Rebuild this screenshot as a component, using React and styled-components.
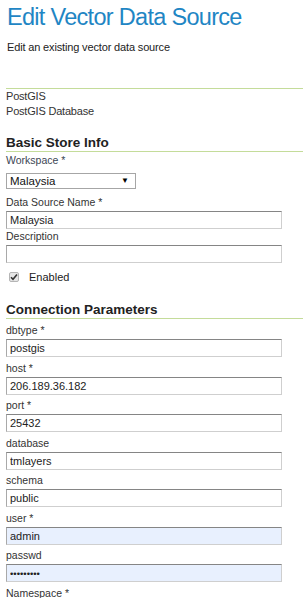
import React from "react";
import styled, { createGlobalStyle } from "styled-components";

const GlobalStyle = createGlobalStyle`
  body {
    margin: 0;
    background: #fff;
    font-family: "Liberation Sans", Arial, sans-serif;
    color: #222;
  }
`;

const Page = styled.div`
  width: 303px;
  height: 598px;
  overflow: hidden;
  padding-left: 6px;
  box-sizing: border-box;
`;

const Title = styled.h1`
  margin: 0;
  font-weight: normal;
  font-size: 23.5px;
  line-height: 34px;
  letter-spacing: -0.7px;
  color: #1f86c4;
  padding-left: 1px;
`;

const Subtitle = styled.p`
  margin: 7px 0 0 1px;
  font-size: 11px;
  line-height: 13px;
  letter-spacing: -0.15px;
  color: #222;
`;

const Divider = styled.div`
  margin-top: 34px;
  border-top: 1px solid #c4dc9a;
`;

const Info = styled.div`
  font-size: 11px;
  line-height: 15px;
  letter-spacing: -0.2px;
  color: #333;
`;

const SectionTitle = styled.h3`
  margin: ${(p) => p.$top}px 0 0;
  font-size: 13.5px;
  line-height: 16px;
  font-weight: bold;
  color: #222;
  border-bottom: 1px solid #c4dc9a;
`;

const Label = styled.label`
  display: block;
  font-size: 10.5px;
  line-height: 14px;
  margin: ${(p) => p.$top ?? 3.5}px 0 2px;
  color: ${(p) => (p.$muted ? "#3b4654" : "#333")};
`;

const Input = styled.input`
  display: block;
  box-sizing: border-box;
  width: 276px;
  height: 18px;
  margin: 0;
  padding: 0 3px;
  font-family: "Liberation Sans", Arial, sans-serif;
  font-size: 11px;
  color: #222;
  background: ${(p) => (p.$filled ? "#e8f0fe" : "#fff")};
  border: 1px solid #cfcfcf;
  border-top-color: #858585;
  border-left-color: #a9a9a9;
  outline: none;
  &[type="password"] {
    font-size: 9.5px;
  }
`;

const Select = styled.div`
  box-sizing: border-box;
  width: 130px;
  height: 16px;
  margin-top: 5.5px;
  border: 1px solid #a6a6a6;
  display: flex;
  align-items: center;
  justify-content: space-between;
  padding: 0 6px 0 3px;
  font-size: 11.5px;
  color: #111;
`;

const Arrow = styled.span`
  font-size: 8px;
  color: #000;
`;

const CheckRow = styled.div`
  display: flex;
  align-items: flex-start;
  margin-top: 8.5px;
  padding-left: 3px;
  font-size: 11px;
  line-height: 11px;
  color: #222;
`;

const Box = styled.span`
  box-sizing: border-box;
  width: 10px;
  height: 10px;
  border: 1px solid #b5b5b5;
  border-radius: 2px;
  background: #e6e6e6;
  display: flex;
  align-items: center;
  justify-content: center;
  margin-right: 10px;
`;

const fields = [
  { label: "dbtype *", value: "postgis", top: 4 },
  { label: "host *", value: "206.189.36.182" },
  { label: "port *", value: "25432" },
  { label: "database", value: "tmlayers" },
  { label: "schema", value: "public" },
  { label: "user *", value: "admin", filled: true },
  { label: "passwd", value: "admin1234", filled: true, type: "password" },
];

export default function App() {
  return (
    <Page>
      <GlobalStyle />
      <Title>Edit Vector Data Source</Title>
      <Subtitle>Edit an existing vector data source</Subtitle>
      <Divider />
      <Info>
        PostGIS
        <br />
        PostGIS Database
      </Info>

      <SectionTitle $top={16}>Basic Store Info</SectionTitle>
      <Label $top={1} $muted>
        Workspace *
      </Label>
      <Select>
        <span>Malaysia</span>
        <Arrow>▼</Arrow>
      </Select>
      <Label $top={6}>Data Source Name *</Label>
      <Input defaultValue="Malaysia" readOnly />
      <Label $top={0.5}>Description</Label>
      <Input defaultValue="" readOnly />
      <CheckRow>
        <Box>
          <svg width="8" height="8" viewBox="0 0 8 8">
            <path d="M1 4.2 L3 6.3 L7 1.5" stroke="#333" strokeWidth="1.6" fill="none" />
          </svg>
        </Box>
        Enabled
      </CheckRow>

      <SectionTitle $top={19.5}>Connection Parameters</SectionTitle>
      {fields.map((f) => (
        <React.Fragment key={f.label}>
          <Label $top={f.top}>{f.label}</Label>
          <Input
            defaultValue={f.value}
            readOnly
            $filled={f.filled}
            type={f.type || "text"}
          />
        </React.Fragment>
      ))}
      <Label>Namespace *</Label>
    </Page>
  );
}
